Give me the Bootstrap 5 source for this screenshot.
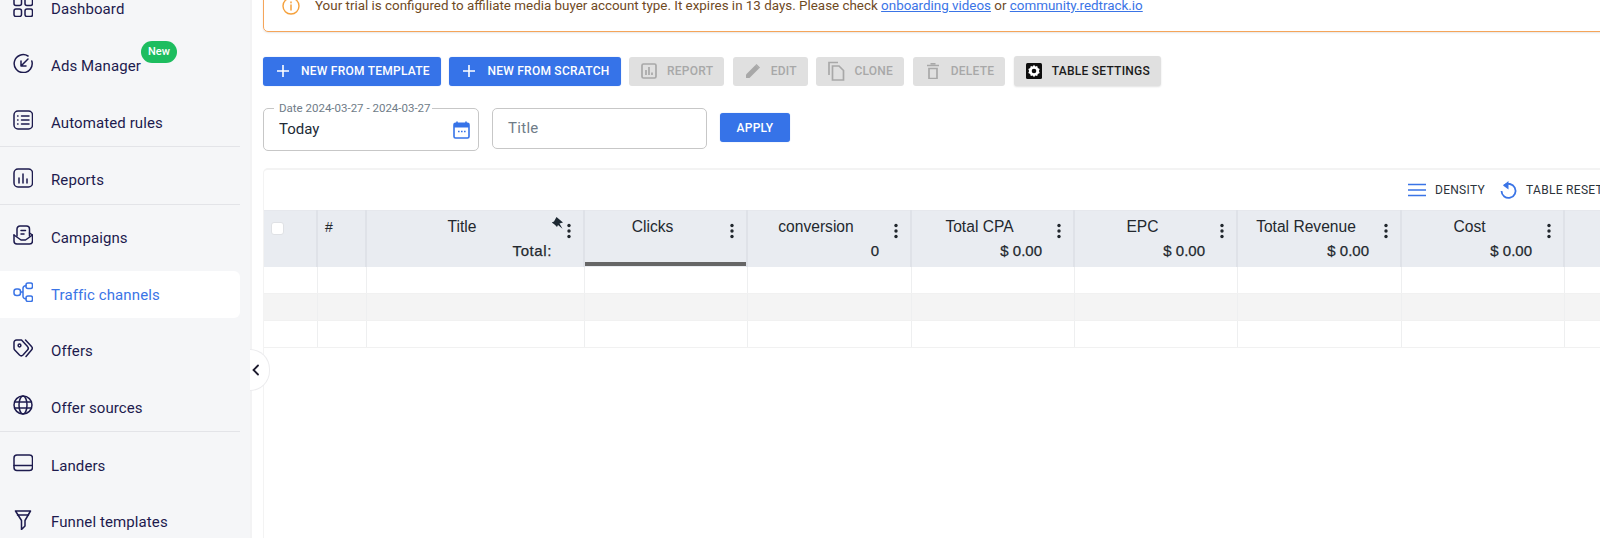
<!DOCTYPE html>
<html lang="en">
<head>
<meta charset="utf-8">
<title>Traffic channels</title>
<link href="https://cdn.jsdelivr.net/npm/bootstrap@5.3.0/dist/css/bootstrap.min.css" rel="stylesheet">
<style>
html,body{height:538px;overflow:hidden;background:#fff;font-family:Roboto,sans-serif}
.shell{height:538px;position:relative}
.side{width:250px;flex:none;background:#f5f6f8;overflow:hidden;padding-right:10px}
.side-list{margin-top:-14.5px}
.side-item{height:47px;margin-bottom:9.7px;padding-left:13px;color:#1d1b4e;font-size:15px;letter-spacing:.1px;border-radius:0 6px 6px 0;text-decoration:none}
.side-item svg{width:20px;height:20px;flex:none;margin:-5px 18px 0 0;fill:none;stroke:currentColor;stroke-width:1.5;stroke-linecap:round;stroke-linejoin:round}
.side-item span{padding-top:1px}
.side-item.on{background:#fff;color:#3a74e6}
.side-rule{height:1px;background:#e3e4e8;margin-top:-9.7px;margin-bottom:9.7px}
.new-tag{top:41px;left:141px;background:#1dbd5f;color:#fff;font-size:11px;font-weight:500;line-height:22px;height:22px;padding:0 7px;border-radius:11px}
.collapse-tab{left:250px;top:349px;width:20px;height:42px;background:#fff;border:1px solid #ececee;border-left:0;border-radius:0 21px 21px 0;padding-left:1px}
.page{min-width:0;overflow:hidden;padding-left:11px;border-left:2px solid #f3f3f4}
.trial{width:1400px;height:50px;margin-top:-18px;border:1px solid #f5a55a;border-radius:5px;padding:0 0 2px 18px;color:#6f4a1f;font-size:13.4px;box-shadow:0 1px 2px rgba(0,0,0,.1)}
.trial a{color:#3a74e6}
.trial svg{width:18px;height:18px;flex:none;margin-right:15px;margin-top:-1px}
.tools{margin-top:24px;gap:8.5px}
.act{height:29px;padding:0 11px 0 12px;border:0;border-radius:3px;font-size:12px;font-weight:500;letter-spacing:.25px;gap:10px;white-space:nowrap}
.act svg{width:16px;height:16px;flex:none;fill:none;stroke:currentColor;stroke-width:1.7}
.act.blue{background:#3673e8;color:#fff;box-shadow:0 0 1px rgba(54,115,232,.5)}
.act.off{background:#e0e0e0;color:#a8a8a8}
.act.dark{background:#e0e0e0;color:#1b1b1b;height:30px;box-shadow:0 1px 2px rgba(0,0,0,.12)}
.filters{margin-top:22px}
.field{width:216px;height:43px;border:1.5px solid #c7c7c7;border-radius:5px;padding:0 8px 0 15px;color:#222b36;font-size:15px}
.field-label{left:10px;top:-8px;background:#fff;padding:0 1px 0 5px;font-size:11.5px;line-height:14px;color:#6f7c88;white-space:nowrap}
.title-field{width:215px;height:41px;margin-left:13px;border:1.5px solid #c7c7c7;border-radius:5px;padding:0 15px;color:#6f7c88;font-size:15px;letter-spacing:.3px}
.apply-btn{width:70px;margin:5px 0 0 13px;padding:0;justify-content:center}
.grid-card{width:1340px;height:420px;margin-top:17px;border:2px solid #f3f3f3;border-left-width:1px;border-right:0;border-radius:5px 0 0 0;overflow:hidden}
.grid-tools{height:40px;gap:13px;padding-right:0;font-size:12px;letter-spacing:.3px;color:#2c333a;font-weight:400;white-space:nowrap}
.grid-tools svg{width:20px;height:20px;fill:none;stroke:#3a74e6;stroke-width:1.6}
.grid-tool{gap:8px}
.grid-table{table-layout:fixed;width:1461px;border-collapse:collapse;margin:0;font-family:"Liberation Sans",Arial,sans-serif}
.grid-table th{height:56px;background:#e9ecf1;border-right:2px solid #dfe2e8;border-top:1px solid #e6e8ed;font-weight:400;font-size:15.6px;color:#23282e;vertical-align:top;padding:0;position:relative}
.grid-table td{height:27px;border-right:1px solid #eeeff0;border-bottom:1px solid #f1f1f1;padding:0;background:#fff}
.grid-table tr.alt td{background:#f4f4f4}
.col-head{padding:7px 26px 0 0;text-align:center;line-height:18px}
.col-total{padding:6px 31px 0 0;text-align:right;line-height:18px;font-size:15px;-webkit-text-stroke:.25px #23282e}
.total-word{letter-spacing:.6px}
.kebab{right:10px;top:12px;width:8px;height:16px}
.pin-mark{right:18px;top:5px;width:14px;height:14px}
.sort-bar{left:0;right:0;bottom:1px;height:4px;background:#666}
.tick{left:7px;top:11px;width:13px;height:13px;background:#fff;border:1px solid #dfe1e5;border-radius:3px}
.hash{padding:7px 0 0 7px;line-height:18px;font-size:14px}
</style>
</head>
<body>
<div class="shell d-flex">
  <aside class="side">
    <nav class="side-list">
      <a class="side-item d-flex align-items-center" href="#"><svg viewBox="0 0 20 20"><rect x="1" y="1" width="7.5" height="7.5" rx="2"/><rect x="12" y="1" width="7.5" height="7.5" rx="2"/><rect x="1" y="12" width="7.5" height="7.5" rx="2"/><rect x="12" y="12" width="7.5" height="7.5" rx="2"/></svg><span>Dashboard</span></a>
      <a class="side-item d-flex align-items-center" href="#"><svg viewBox="0 0 20 20"><path d="M15 3A9 9 0 1 0 18.8 8"/><path d="M15 6 8 13M8 8v5h5"/></svg><span>Ads Manager</span></a>
      <a class="side-item d-flex align-items-center" href="#"><svg viewBox="0 0 20 20"><rect x="1" y="1" width="18.5" height="18" rx="4"/><path d="M8.5 6H16M8.5 10H16M8.5 14H16M4.6 6h.4M4.6 10h.4M4.6 14h.4"/></svg><span>Automated rules</span></a>
      <div class="side-rule"></div>
      <a class="side-item d-flex align-items-center" href="#"><svg viewBox="0 0 20 20"><rect x="1" y="1" width="18.5" height="18" rx="4"/><path d="M6 10v5M10 6v9M14 11v4"/></svg><span>Reports</span></a>
      <div class="side-rule"></div>
      <a class="side-item d-flex align-items-center" href="#"><svg viewBox="0 0 20 20"><path d="M1 10v6a3 3 0 0 0 3 3h12.5a3 3 0 0 0 3-3v-6l-3-2"/><path d="M4 11V4a3 3 0 0 1 3-3h6.500a3 3 0 0 1 3 3v7"/><path d="M1 10l7 5h4.500l7-5M8 5.500h4.500M8 9h3"/></svg><span>Campaigns</span></a>
      <a class="side-item on d-flex align-items-center" href="#"><svg viewBox="0 0 20 20"><rect x="1" y="7" width="6.500" height="6.500" rx="2.500"/><rect x="13" y="1" width="6.500" height="5.500" rx="2"/><rect x="13" y="14" width="6.500" height="5.500" rx="2"/><path d="M7.500 10H10M13 3.800h-.5A2.500 2.500 0 0 0 10 6.300v8a2.500 2.500 0 0 0 2.500 2.500h.5"/></svg><span>Traffic channels</span></a>
      <a class="side-item d-flex align-items-center" href="#"><svg viewBox="0 0 20 20"><path d="M1 3.500A2.500 2.500 0 0 1 3.500 1h5l6 6.500a2.500 2.500 0 0 1 0 3.500l-4.500 5a2.500 2.500 0 0 1-3.500 0L1.700 11A2.500 2.500 0 0 1 1 9.300z"/><circle cx="6.500" cy="6.500" r="1.400"/><path d="M12.500 1l6 6.500a2.500 2.500 0 0 1 0 3.500L13 17.500"/></svg><span>Offers</span></a>
      <a class="side-item d-flex align-items-center" href="#"><svg viewBox="0 0 20 20"><circle cx="10" cy="10" r="9"/><ellipse cx="10" cy="10" rx="4" ry="9"/><path d="M1.500 7h17M1.500 13h17"/></svg><span>Offer sources</span></a>
      <div class="side-rule"></div>
      <a class="side-item d-flex align-items-center" href="#"><svg viewBox="0 0 20 20"><rect x="1" y="2" width="18.500" height="15.500" rx="3"/><path d="M1 12.500h18.500"/></svg><span>Landers</span></a>
      <a class="side-item d-flex align-items-center" href="#"><svg viewBox="0 0 20 20"><path d="M2.500 1h15l-5.500 9.500V16l-3.500 3.500V10.500z"/><path d="M4.500 5h11"/></svg><span>Funnel templates</span></a>
    </nav>
  </aside>
  <span class="new-tag position-absolute">New</span>
  <div class="collapse-tab position-absolute d-flex align-items-center"><svg width="10" height="12" viewBox="0 0 10 12"><path d="M7 1.500 2.500 6 7 10.500" fill="none" stroke="#1d1b2e" stroke-width="1.800" stroke-linecap="round"/></svg></div>

  <main class="page flex-grow-1">
    <div class="trial d-flex align-items-center">
      <svg viewBox="0 0 18 18"><circle cx="9" cy="9" r="8" fill="none" stroke="#f5a13c" stroke-width="1.400"/><path d="M9 8v5M9 5v.8" stroke="#f5a13c" stroke-width="1.500" stroke-linecap="round"/></svg>
      <span>Your trial is configured to affiliate media buyer account type. It expires in 13 days. Please check <a href="#">onboarding videos</a> or <a href="#">community.redtrack.io</a></span>
    </div>

    <div class="tools d-flex align-items-center">
      <button class="act blue d-flex align-items-center" type="button"><svg viewBox="0 0 16 16"><path d="M8 2v12M2 8h12" stroke-width="1.600"/></svg>NEW FROM TEMPLATE</button>
      <button class="act blue d-flex align-items-center" type="button"><svg viewBox="0 0 16 16"><path d="M8 2v12M2 8h12" stroke-width="1.600"/></svg>NEW FROM SCRATCH</button>
      <button class="act off d-flex align-items-center" type="button"><svg viewBox="0 0 16 16"><rect x="1" y="1" width="14" height="14" rx="1.500"/><path d="M5 7v5M8 4v8M11 9.500V12"/></svg>REPORT</button>
      <button class="act off d-flex align-items-center" type="button"><svg viewBox="0 0 16 16"><path d="M1 15v-3.500L10.500 2l3.500 3.500L4.500 15z" fill="#a8a8a8" stroke="none"/><path d="M11.500 1l3.500 3.500-1 1L10.500 2z" fill="#a8a8a8" stroke="none"/></svg>EDIT</button>
      <button class="act off d-flex align-items-center" type="button"><svg viewBox="0 0 16 16" style="overflow:visible"><path d="M1 12V-.5h9"/><path d="M4.500 3H11l4.500 4.500V17H4.500z"/></svg>CLONE</button>
      <button class="act off d-flex align-items-center" type="button"><svg viewBox="0 0 16 16"><path d="M2 2.500h12M4 5.500h8v10H4z"/><path d="M5.500 .8h5"/></svg>DELETE</button>
      <button class="act dark d-flex align-items-center" type="button"><svg viewBox="0 0 16 16" style="stroke:none"><rect width="16" height="16" rx="1.500" fill="#0d0d0d"/><path d="M8 1.800l1.200 1.700 2-.5.600 2 1.900 1-.8 2 .8 2-1.900 1-.6 2-2-.5L8 14.200l-1.200-1.700-2 .5-.6-2-1.900-1 .8-2-.8-2 1.900-1 .6-2 2 .5z" fill="#fff"/><circle cx="8" cy="8" r="2.300" fill="#0d0d0d"/></svg>TABLE SETTINGS</button>
    </div>

    <div class="filters d-flex align-items-start">
      <div class="field position-relative d-flex align-items-center justify-content-between">
        <span class="field-label position-absolute">Date 2024-03-27 - 2024-03-27</span>
        <span>Today</span>
        <svg width="17" height="18" viewBox="0 0 17 18"><path d="M4 .500v3M13 .500v3" stroke="#3673e8" stroke-width="1.600"/><rect x="1" y="2.300" width="15" height="14.700" rx="1.500" fill="#fff" stroke="#3673e8" stroke-width="1.600"/><path d="M1 3h15v3.500H1z" fill="#3673e8"/><path d="M5 10.500h1.600M8 10.500h1.600M11 10.500h1.600" stroke="#3673e8" stroke-width="1.600"/></svg>
      </div>
      <div class="title-field d-flex align-items-center">Title</div>
      <button class="act blue apply-btn d-flex align-items-center" type="button">APPLY</button>
    </div>

    <section class="grid-card">
      <div class="grid-tools d-flex align-items-center justify-content-end">
        <span class="grid-tool d-flex align-items-center"><svg viewBox="0 0 20 20"><path d="M1 4.500h18M1 10h18M1 15.500h18"/></svg>DENSITY</span>
        <span class="grid-tool d-flex align-items-center"><svg viewBox="0 0 20 20"><path d="M6 5.500a7 7 0 1 1-2.500 5.500" stroke-width="1.800"/><path d="M10.500 1 5 5.500l5.500 4z" fill="#3a74e6" stroke="none"/></svg>TABLE RESET</span>
      </div>
      <table class="grid-table">
        <colgroup><col style="width:53px"><col style="width:49px"><col style="width:218px"><col style="width:163px"><col style="width:164px"><col style="width:163px"><col style="width:163px"><col style="width:164px"><col style="width:163px"><col style="width:161px"></colgroup>
        <thead><tr>
          <th><span class="tick position-absolute d-block"></span></th>
          <th><div class="hash">#</div></th>
          <th><div class="col-head">Title</div><div class="col-total"><span class="total-word">Total:</span></div>
            <svg class="pin-mark position-absolute" viewBox="0 0 14 14"><path d="M5.500 1 3 5.500.8 6.500l3 2.300L6 11l1-2 4.500 3.800L8.500 7.500 12 6.500z" fill="#1e2933"/></svg>
            <svg class="kebab position-absolute" viewBox="0 0 8 16"><circle cx="4" cy="2.500" r="1.700" fill="#22282e"/><circle cx="4" cy="8" r="1.700" fill="#22282e"/><circle cx="4" cy="13.500" r="1.700" fill="#22282e"/></svg></th>
          <th><div class="col-head">Clicks</div><span class="sort-bar position-absolute"></span>
            <svg class="kebab position-absolute" viewBox="0 0 8 16"><circle cx="4" cy="2.500" r="1.700" fill="#22282e"/><circle cx="4" cy="8" r="1.700" fill="#22282e"/><circle cx="4" cy="13.500" r="1.700" fill="#22282e"/></svg></th>
          <th><div class="col-head">conversion</div><div class="col-total">0</div>
            <svg class="kebab position-absolute" viewBox="0 0 8 16"><circle cx="4" cy="2.500" r="1.700" fill="#22282e"/><circle cx="4" cy="8" r="1.700" fill="#22282e"/><circle cx="4" cy="13.500" r="1.700" fill="#22282e"/></svg></th>
          <th><div class="col-head">Total CPA</div><div class="col-total">$ 0.00</div>
            <svg class="kebab position-absolute" viewBox="0 0 8 16"><circle cx="4" cy="2.500" r="1.700" fill="#22282e"/><circle cx="4" cy="8" r="1.700" fill="#22282e"/><circle cx="4" cy="13.500" r="1.700" fill="#22282e"/></svg></th>
          <th><div class="col-head">EPC</div><div class="col-total">$ 0.00</div>
            <svg class="kebab position-absolute" viewBox="0 0 8 16"><circle cx="4" cy="2.500" r="1.700" fill="#22282e"/><circle cx="4" cy="8" r="1.700" fill="#22282e"/><circle cx="4" cy="13.500" r="1.700" fill="#22282e"/></svg></th>
          <th><div class="col-head">Total Revenue</div><div class="col-total">$ 0.00</div>
            <svg class="kebab position-absolute" viewBox="0 0 8 16"><circle cx="4" cy="2.500" r="1.700" fill="#22282e"/><circle cx="4" cy="8" r="1.700" fill="#22282e"/><circle cx="4" cy="13.500" r="1.700" fill="#22282e"/></svg></th>
          <th><div class="col-head">Cost</div><div class="col-total">$ 0.00</div>
            <svg class="kebab position-absolute" viewBox="0 0 8 16"><circle cx="4" cy="2.500" r="1.700" fill="#22282e"/><circle cx="4" cy="8" r="1.700" fill="#22282e"/><circle cx="4" cy="13.500" r="1.700" fill="#22282e"/></svg></th>
          <th></th>
        </tr></thead>
        <tbody>
          <tr><td></td><td></td><td></td><td></td><td></td><td></td><td></td><td></td><td></td><td></td></tr>
          <tr class="alt"><td></td><td></td><td></td><td></td><td></td><td></td><td></td><td></td><td></td><td></td></tr>
          <tr><td></td><td></td><td></td><td></td><td></td><td></td><td></td><td></td><td></td><td></td></tr>
        </tbody>
      </table>
    </section>
  </main>
</div>
<script src="https://cdn.jsdelivr.net/npm/bootstrap@5.3.0/dist/js/bootstrap.bundle.min.js"></script>
</body>
</html>
